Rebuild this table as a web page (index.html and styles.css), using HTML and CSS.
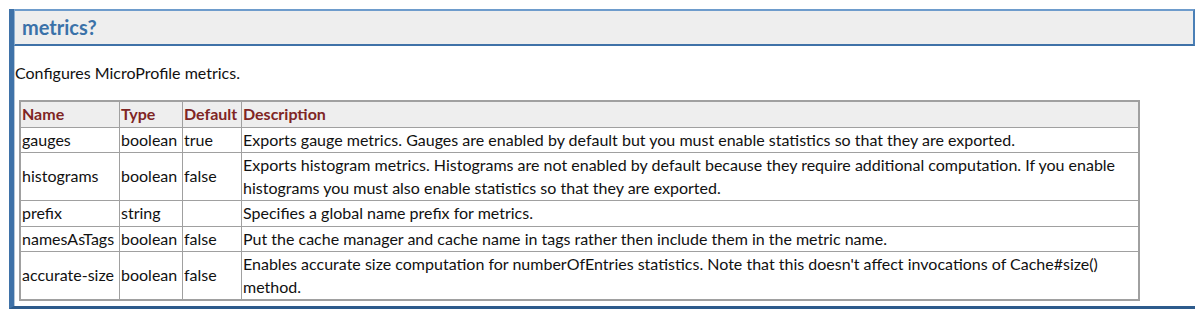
FILE: index.html
```html
<!DOCTYPE html>
<html>
<head>
<meta charset="utf-8">
<link rel="stylesheet" href="styles.css">
</head>
<body>
<div class="section">
  <div class="heading">metrics?</div>
  <div class="content">
    <p class="desc">Configures MicroProfile metrics.</p>
    <table class="attrs">
      <thead>
        <tr><th class="c-name">Name</th><th class="c-type">Type</th><th class="c-def">Default</th><th class="c-desc">Description</th></tr>
      </thead>
      <tbody>
        <tr><td>gauges</td><td>boolean</td><td>true</td><td>Exports gauge metrics. Gauges are enabled by default but you must enable statistics so that they are exported.</td></tr>
        <tr><td>histograms</td><td>boolean</td><td>false</td><td>Exports histogram metrics. Histograms are not enabled by default because they require additional computation. If you enable histograms you must also enable statistics so that they are exported.</td></tr>
        <tr><td>prefix</td><td>string</td><td></td><td>Specifies a global name prefix for metrics.</td></tr>
        <tr><td>namesAsTags</td><td>boolean</td><td>false</td><td>Put the cache manager and cache name in tags rather then include them in the metric name.</td></tr>
        <tr><td>accurate-size</td><td>boolean</td><td>false</td><td>Enables accurate size computation for numberOfEntries statistics. Note that this doesn't affect invocations of Cache#size() method.</td></tr>
      </tbody>
    </table>
  </div>
</div>
</body>
</html>
```
FILE: styles.css
```css
html, body { margin: 0; padding: 0; background: #fff; }
body {
  font-family: Lato, "Liberation Sans", sans-serif;
  font-size: 16px;
  color: #111;
  padding: 9px 5px 0 9px;
}
.section {
  border-left: 5px solid #3f72a8;
  border-bottom: 3px solid #2d5b8c;
}
.heading {
  background: #eeeeee;
  border-top: 2px solid #6e9ccc;
  border-right: 2px solid #4a7fb6;
  border-bottom: 2px solid #3f72a8;
  border-left: 1px solid #8fb0d0;
  height: 33px;
  line-height: 33px;
  padding-left: 7px;
  font-weight: bold;
  font-size: 20px;
  color: #3b72a9;
}
.content {
  border-left: 1px solid #b8c8d8;
  padding: 0 0 5px 0;
}
.desc {
  margin: 0;
  padding: 17px 0 17px 0;
  line-height: 20px;
}
.attrs {
  margin-left: 4px;
  width: 1121px;
  border-collapse: collapse;
  border: 2px solid #a0a0a0;
  line-height: 22.5px;
}
.attrs th, .attrs td {
  border: 1px solid #a0a0a0;
  padding: 1px 1px 1px 1px;
  text-align: left;
  vertical-align: middle;
}
.attrs th {
  background: #eeeeee;
  color: #7f2524;
  font-weight: bold;
}
.c-name { width: 96px; }
.c-type { width: 60px; }
.c-def { width: 56px; }
```
